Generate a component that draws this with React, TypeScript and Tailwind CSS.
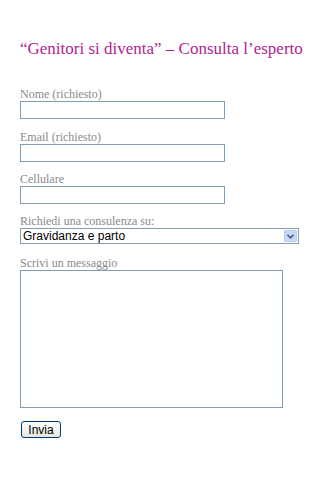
export default function App() {
  const serif = { fontFamily: '"Liberation Serif", "Times New Roman", serif' };
  const label = "block text-[12px] leading-[14px] text-[#8a8a8a]";
  const input = "block h-[18px] w-[205px] border border-[#7f9db9] bg-white";
  return (
    <div className="w-[320px] h-[480px] bg-white" style={serif}>
      <div className="pl-[20px] pt-[38px]">
        <h1 className="text-[17px] leading-[22px] text-[#b0248f] whitespace-nowrap">
          “Genitori si diventa” – Consulta l’esperto
        </h1>
        <div className="mt-[27px]">
          <span className={label}>Nome (richiesto)</span>
          <div className={input} />
        </div>
        <div className="mt-[11px]">
          <span className={label}>Email (richiesto)</span>
          <div className={input} />
        </div>
        <div className="mt-[10px]">
          <span className={label}>Cellulare</span>
          <div className={input} />
        </div>
        <div className="mt-[10px]">
          <span className={label}>Richiedi una consulenza su:</span>
          <div className="flex h-[16px] w-[279px] items-center justify-between border border-[#7f9db9] bg-white pl-[2px]">
            <span className="text-[12px] text-black" style={{ fontFamily: '"Liberation Sans", Arial, sans-serif' }}>
              Gravidanza e parto
            </span>
            <div className="mr-[1px] flex h-[12px] w-[13px] items-center justify-center rounded-[1px] border border-[#b8caf0] bg-[#c8d8f8]">
              <svg width="7" height="5" viewBox="0 0 7 5">
                <path d="M0.5 0.8 L3.5 3.8 L6.5 0.8" stroke="#4d6185" strokeWidth="1.6" fill="none" />
              </svg>
            </div>
          </div>
        </div>
        <div className="mt-[12px]">
          <span className={label}>Scrivi un messaggio</span>
          <div className="h-[138px] w-[263px] border border-[#7f9db9] bg-white" />
        </div>
        <div className="mt-[13px] pl-[1px]">
          <div
            className="flex h-[17px] w-[40px] items-center justify-center rounded-[3px] border border-[#003c74] bg-gradient-to-b from-white to-[#e6e6df] text-[12px] text-black"
            style={{ fontFamily: '"Liberation Sans", Arial, sans-serif' }}
          >
            Invia
          </div>
        </div>
      </div>
    </div>
  );
}
